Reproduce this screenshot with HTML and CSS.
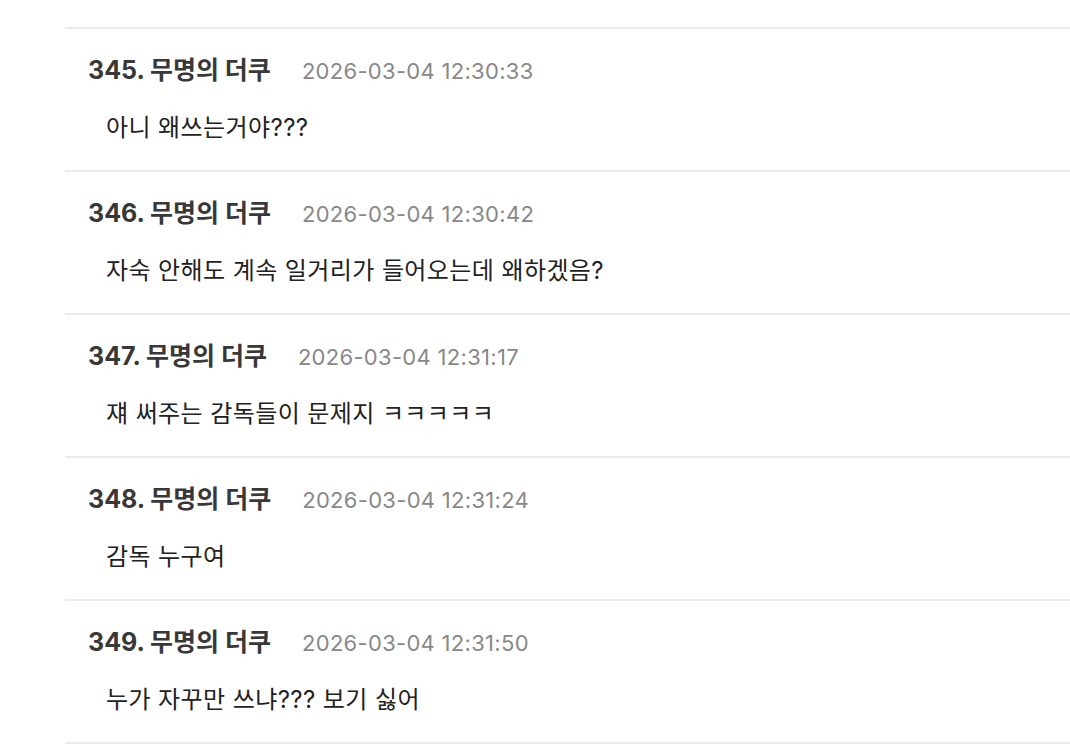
FILE: index.html
```html
<!DOCTYPE html>
<html lang="ko">
<head>
<meta charset="utf-8">
<title>댓글</title>
<link rel="stylesheet" href="styles.css">
</head>
<body>
<div class="comments">
  <div class="comment">
    <div class="meta"><span class="name">345. 무명의 더쿠</span><span class="date">2026-03-04 12:30:33</span></div>
    <div class="text">아니 왜쓰는거야???</div>
  </div>
  <div class="comment">
    <div class="meta"><span class="name">346. 무명의 더쿠</span><span class="date">2026-03-04 12:30:42</span></div>
    <div class="text">자숙 안해도 계속 일거리가 들어오는데 왜하겠음?</div>
  </div>
  <div class="comment">
    <div class="meta"><span class="name">347. 무명의 더쿠</span><span class="date">2026-03-04 12:31:17</span></div>
    <div class="text">쟤 써주는 감독들이 문제지 ㅋㅋㅋㅋㅋ</div>
  </div>
  <div class="comment">
    <div class="meta"><span class="name">348. 무명의 더쿠</span><span class="date">2026-03-04 12:31:24</span></div>
    <div class="text">감독 누구여</div>
  </div>
  <div class="comment">
    <div class="meta"><span class="name">349. 무명의 더쿠</span><span class="date">2026-03-04 12:31:50</span></div>
    <div class="text">누가 자꾸만 쓰냐??? 보기 싫어</div>
  </div>
</div>
</body>
</html>
```
FILE: styles.css
```css
html, body {
  margin: 0;
  background: #ffffff;
}
body {
  font-family: Inter, "Noto Sans CJK KR", sans-serif;
  overflow: hidden;
}
.comments {
  padding: 27px 0 0 65px;
}
.comment {
  border-top: 2px solid #ececec;
  padding: 25px 0 26px 23px;
  display: flex;
  flex-direction: column;
  gap: 26px;
}
.comment:last-child {
  border-bottom: 2px solid #ececec;
}
.meta {
  display: flex;
  align-items: baseline;
  gap: 31px;
  height: 32px;
  line-height: 32px;
}
.name {
  font-size: 25px;
  font-weight: bold;
  color: #383838;
}
.date {
  font-size: 22px;
  letter-spacing: 0.3px;
  color: #888888;
}
.text {
  height: 32px;
  line-height: 32px;
  font-size: 24px;
  letter-spacing: 0.4px;
  color: #222222;
  padding-left: 18px;
}
```
